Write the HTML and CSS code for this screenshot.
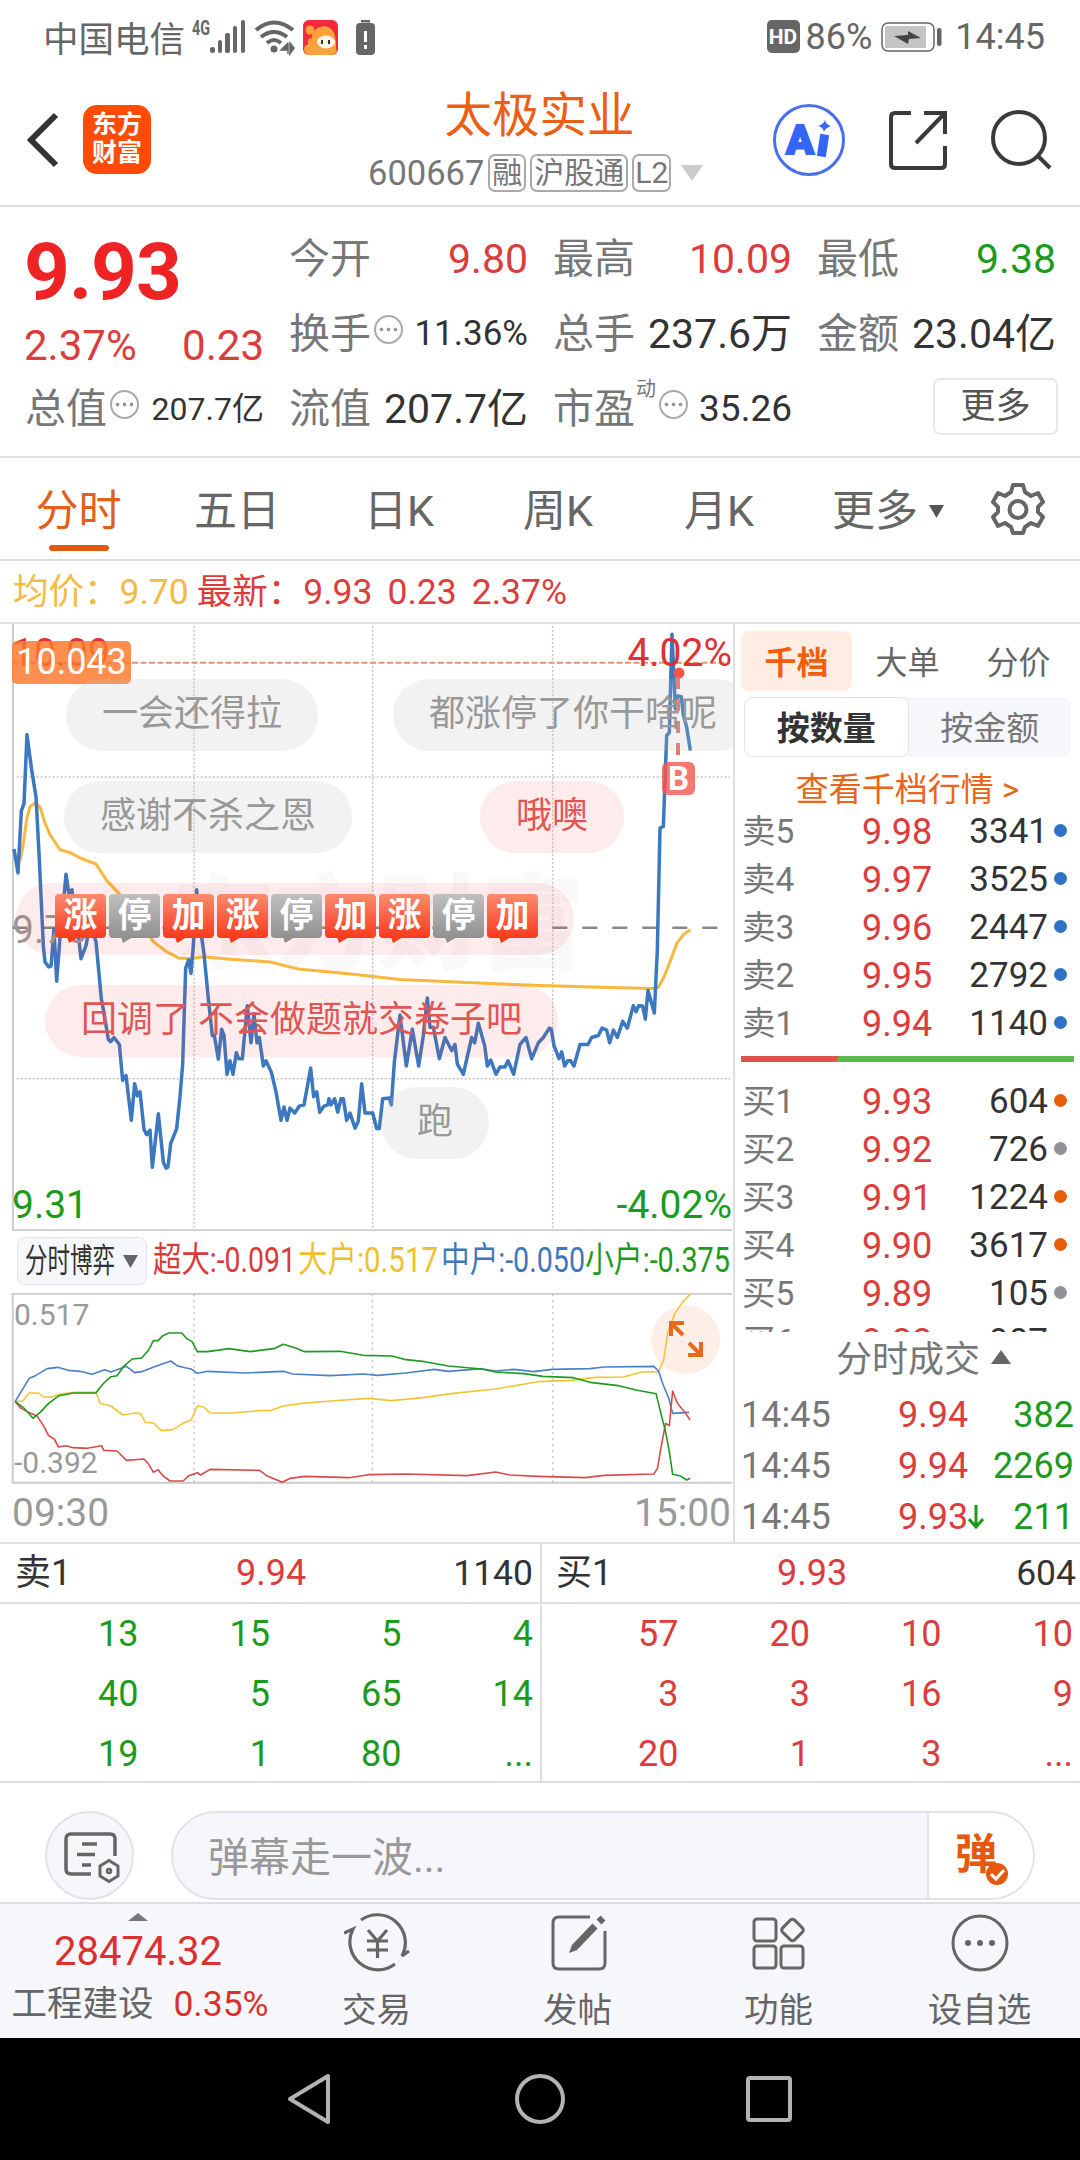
FILE: index.html
```
<!DOCTYPE html>
<html lang="zh-CN">
<head>
    <meta charset="UTF-8">
    <title>太极实业 600667</title>
    <link rel="stylesheet" href="styles.css">
</head>
<body>
    <!-- Status bar -->
    <div class="status-bar">
        <span class="carrier">中国电信</span>
        <svg class="status-icons" width="190" height="40" viewBox="190 16 190 40">
            <text x="192" y="34" class="net" textLength="18" lengthAdjust="spacingAndGlyphs">4G</text>
            <g fill="#666">
                <rect x="210" y="46" width="5" height="6" rx="2.500"/>
                <rect x="218" y="39" width="4" height="13" rx="2"/>
                <rect x="225" y="32" width="5" height="20" rx="2"/>
                <rect x="233" y="25" width="4" height="27" rx="2"/>
                <rect x="241" y="19" width="4" height="33" rx="2"/>
                <circle cx="274" cy="48" r="3.500"/>
                <path d="M288 42v11M288 42l-7 7h7M290 42v11l4-6z" stroke="#666" stroke-width="1.500"/>
            </g>
            <path d="M256 29q18-15 37 0M261 36q13-10 26 0M267 42q7-6 14 0" fill="none" stroke="#666" stroke-width="4"/>
            <rect x="303" y="19" width="35" height="35" rx="6" fill="#f5283c"/>
            <path d="M304 47q2-4 4-3q-1-7 3-7v5q0-16 14-17q11 2 11 19q0 6 1 6q-2 4-6 4h-21q-6 0-6-7z" fill="#f9a33a"/>
            <circle cx="310" cy="29" r="4.500" fill="#f9a33a"/>
            <ellipse cx="326" cy="41" rx="9" ry="6.500" fill="#fff3e6"/>
            <path d="M322 39v4M329 39v4" stroke="#333" stroke-width="2"/>
            <rect x="361" y="19" width="9" height="2.500" fill="#666"/>
            <rect x="356" y="22" width="19" height="32" rx="4" fill="#666"/>
            <path d="M365.500 30v11M365.500 44v4" stroke="#fff" stroke-width="3"/>
        </svg>
        <div class="status-right">
            <span class="hd">HD</span>
            <span>86%</span>
            <svg class="battery" width="62" height="30" viewBox="0 0 62 30">
                <rect x="1" y="1" width="52" height="28" rx="6" fill="#fff" stroke="#666" stroke-width="1.500"/>
                <rect x="4" y="4" width="41" height="22" rx="1" fill="#c4c4c4"/>
                <path d="M13 14l14-1V9l13 7-12 1-1 5z" fill="#444"/>
                <rect x="56" y="6" width="4.500" height="18" rx="2" fill="#666"/>
            </svg>
            <span>14:45</span>
        </div>
    </div>

    <!-- Header -->
    <header class="header">
        <div class="header-left">
            <svg width="34" height="58" viewBox="0 0 34 58"><path d="M31 4L6 29l25 25" fill="none" stroke="#333" stroke-width="6"/></svg>
            <div class="logo">东方<br>财富</div>
        </div>
        <div class="header-title">
            <h1>太极实业</h1>
            <div class="code">
                <span>600667</span>
                <span class="tag">融</span>
                <span class="tag">沪股通</span>
                <span class="tag">L2</span>
                <svg width="22" height="16" viewBox="0 0 22 16"><path d="M0 0h22L11 16z" fill="#ccc"/></svg>
            </div>
        </div>
        <div class="header-right">
            <svg width="74" height="74" viewBox="0 0 74 74">
                <circle cx="37" cy="37" r="34.500" fill="#fff" stroke="#4a6fee" stroke-width="3"/>
                <text x="14" y="51" class="ai" textLength="28" lengthAdjust="spacingAndGlyphs">A</text>
                <path d="M52 36l-2 13" stroke="#3465f6" stroke-width="9" stroke-linecap="square"/>
                <path d="M53 17q1 5 6 6q-6 2-7 6q-1-5-6-6q6-2 7-6z" fill="#3465f6"/>
            </svg>
            <svg width="58" height="60" viewBox="0 0 58 60" fill="none" stroke="#3a3a3a" stroke-width="4">
                <path d="M22 3H6q-4 0-4 4v47q0 4 4 4h46q4 0 4-4V36M35 3h21v21M56 3L27 33"/>
            </svg>
            <svg width="62" height="62" viewBox="0 0 62 62" fill="none" stroke="#3a3a3a" stroke-width="4">
                <circle cx="29" cy="29" r="26"/>
                <path d="M47 46l13 13"/>
            </svg>
        </div>
    </header>

    <!-- Quote -->
    <section class="quote">
        <div class="quote-col">
            <div class="price">9.93</div>
            <div class="change"><span>2.37%</span><span>0.23</span></div>
            <div class="item"><label>总值</label><i class="more-dot"></i><b class="s33">207.7亿</b></div>
        </div>
        <div class="quote-col">
            <div class="item"><label>今开</label><b class="red">9.80</b></div>
            <div class="item"><label>换手</label><i class="more-dot"></i><b class="s36">11.36%</b></div>
            <div class="item"><label>流值</label><b>207.7亿</b></div>
        </div>
        <div class="quote-col">
            <div class="item"><label>最高</label><b class="red">10.09</b></div>
            <div class="item"><label>总手</label><b>237.6万</b></div>
            <div class="item"><label>市盈</label><sup>动</sup><i class="more-dot"></i><b class="s38">35.26</b></div>
        </div>
        <div class="quote-col">
            <div class="item"><label>最低</label><b class="green">9.38</b></div>
            <div class="item"><label>金额</label><b>23.04亿</b></div>
            <div class="item end"><button class="more-btn">更多</button></div>
        </div>
    </section>

    <!-- Period tabs -->
    <nav class="tabs">
        <a class="active">分时</a>
        <a>五日</a>
        <a>日K</a>
        <a>周K</a>
        <a>月K</a>
        <a>更多<svg width="15" height="13" viewBox="0 0 15 13"><path d="M0 0h15L7.500 13z" fill="#555"/></svg></a>
        <svg class="gear" width="54" height="54" viewBox="0 0 54 54" fill="none" stroke="#666" stroke-width="4" stroke-linejoin="round">
            <path d="M22 3h10l2 7 6 4 7-3 5 9-5 5v5l5 5-5 9-7-3-6 4-2 6H22l-2-6-6-4-7 3-5-9 5-5v-5l-5-5 5-9 7 3 6-4z"/>
            <circle cx="27" cy="27.500" r="8.500"/>
        </svg>
    </nav>

    <div class="info-line">
        <span class="avg">均价：<em>9.70</em></span>
        <span class="last">最新：<em>9.93</em><em>0.23</em><em>2.37%</em></span>
    </div>

    <main class="board">
        <!-- Charts -->
        <div class="charts">
            <div class="chart-box">
                <div class="watermark">东方财富</div>
                <svg class="plot" width="734" height="607" viewBox="0 32 2202 1487" preserveAspectRatio="none" fill="none">
                    <g stroke="#c4c4c4" stroke-width="1.500" stroke-dasharray="2 2">
                        <path d="M582 36V1516M1118 36V1516M1658 36V1516M50 407H2190M50 1146H2190"/>
                    </g>
                    <path d="M39 32V1517H2196" stroke="#ccc" stroke-width="2"/>
                    <path d="M39 127H2190" stroke="#e2966a" stroke-width="2" stroke-dasharray="6 2.500"/>
                    <path d="M37 776H2155" stroke="#888" stroke-width="2.500" stroke-dasharray="15 15"/>
                    <polyline stroke="#f9b73e" stroke-width="3" points="60,612 70,570 80,510 90,480 105,470 120,480 135,520 150,548 180,585 210,592 240,605 288,620 320,660 360,695 400,740 460,810 500,835 535,850 570,852 610,847 690,853 810,860 900,878 1000,885 1080,892 1200,903 1400,910 1600,917 1800,922 1960,925 1975,922 1990,900 2010,860 2030,815 2050,793 2071,781"/>
                    <polyline stroke="#3b78bf" stroke-width="3.500" points="42,583 54,642 64,490 72,472 81,303 95,390 108,455 118,610 130,820 135,860 146,872 153,870 162,780 170,907 180,800 190,720 198,645 206,690 216,683 225,770 236,800 243,852 258,820 265,790 275,780 288,810 304,950 312,985 325,1050 332,1055 342,1045 358,1062 368,1150 378,1138 394,1248 404,1158 412,1188 420,1178 432,1270 440,1283 450,1272 457,1363 475,1232 490,1350 498,1365 504,1362 512,1305 530,1268 540,1190 548,1110 557,875 566,855 573,888 580,820 590,683 600,770 612,840 625,950 637,1040 643,1040 655,1098 665,1025 672,1040 681,1135 690,1102 699,1135 709,1082 716,1097 727,1097 742,967 753,1058 762,987 771,1058 778,1045 790,1115 798,1102 814,1130 828,1178 843,1248 852,1215 861,1248 870,1218 884,1230 898,1213 912,1210 932,1120 941,1190 950,1178 959,1228 972,1213 983,1210 987,1195 993,1210 1004,1195 1013,1228 1023,1195 1030,1195 1040,1248 1050,1230 1065,1267 1075,1250 1085,1158 1095,1230 1118,1230 1130,1268 1138,1268 1148,1195 1168,1193 1174,1210 1183,1105 1200,990 1219,1115 1237,1025 1256,1115 1270,1040 1282,948 1290,1020 1300,1020 1318,1097 1335,1045 1355,1077 1365,1062 1372,1110 1390,1135 1415,1045 1424,1058 1435,1010 1454,1065 1462,1115 1472,1100 1488,1135 1500,1117 1515,1117 1524,1102 1541,1135 1560,1062 1578,1045 1595,1097 1615,1058 1630,1045 1648,1022 1654,1025 1662,1065 1677,1097 1685,1080 1694,1115 1703,1102 1712,1102 1722,1115 1740,1062 1764,1062 1775,1045 1795,1040 1806,1022 1820,1027 1829,1058 1840,1027 1852,1045 1868,1005 1882,1022 1900,967 1908,982 1916,967 1928,968 1936,1000 1944,930 1963,985 1972,830 1980,532 1990,528 2000,305 2008,298 2016,57 2026,240 2034,208 2044,210 2050,255 2060,285 2071,342"/>
                </svg>
                <span class="axis top-left">10.09</span>
                <span class="axis mid-left">9.70</span>
                <span class="axis bottom-left">9.31</span>
                <span class="axis top-right">4.02%</span>
                <span class="axis bottom-right">-4.02%</span>
                <span class="level">10.043</span>
                <svg class="marker" width="34" height="130" viewBox="0 0 34 130">
                    <circle cx="18" cy="6" r="5.500" fill="#f5564c"/>
                    <path d="M17 10V94" stroke="#e8766c" stroke-width="4" stroke-dasharray="12 10"/>
                    <rect x="1" y="95" width="33" height="33" rx="6" fill="#f5564c" fill-opacity=".8"/>
                    <text x="17.500" y="123" text-anchor="middle">B</text>
                </svg>
                <!-- Danmaku -->
                <div class="bubble b1">一会还得拉</div>
                <div class="bubble b2">都涨停了你干啥呢</div>
                <div class="bubble b3">感谢不杀之恩</div>
                <div class="bubble b4 hot">哦噢</div>
                <div class="bubble b5 hot">
                    <i>涨</i><i class="gray">停</i><i>加</i><i>涨</i><i class="gray">停</i><i>加</i><i>涨</i><i class="gray">停</i><i>加</i>
                </div>
                <div class="bubble b6 hot">回调了 不会做题就交卷子吧</div>
                <div class="bubble b7">跑</div>
            </div>

            <svg class="legend" width="733" height="62" viewBox="0 1230 733 62">
                <rect x="17.500" y="1236.500" width="129" height="47" rx="7" fill="#f6f7fa" stroke="#e3e5ea"/>
                <g font-size="35">
                    <text x="25" y="1271" textLength="90" lengthAdjust="spacingAndGlyphs" fill="#333" font-size="33">分时博弈</text>
                    <path d="M123 1254h15l-7.500 13z" fill="#666"/>
                    <text x="153" y="1271" textLength="143" lengthAdjust="spacingAndGlyphs" fill="#d93a3a">超大:-0.091</text>
                    <text x="298" y="1271" textLength="140" lengthAdjust="spacingAndGlyphs" fill="#efc02c">大户:0.517</text>
                    <text x="441" y="1271" textLength="144" lengthAdjust="spacingAndGlyphs" fill="#3f77bd">中户:-0.050</text>
                    <text x="585" y="1271" textLength="145" lengthAdjust="spacingAndGlyphs" fill="#1c9a1c">小户:-0.375</text>
                </g>
            </svg>

            <div class="flow-box">
                <svg class="plot" width="734" height="191" viewBox="0 214 1555 573" preserveAspectRatio="none" fill="none">
                    <path d="M1453 251a73 103 0 0 1 0 206a73 103 0 0 1 0-206z" fill="#fdefe7" stroke="none"/>
                    <g stroke="#c4c4c4" stroke-width="1.500" stroke-dasharray="2 4">
                        <path d="M411 218V783M789 218V783M1171 218V783"/>
                    </g>
                    <path d="M1551 216H27V783H1551" stroke="#ccc" stroke-width="2"/>
                    <g stroke-width="1.600">
                        <polyline stroke="#f2c534" points="32,540 48,538 62,514 82,514 92,526 110,526 125,518 160,512 203,512 212,545 235,553 260,580 285,574 298,576 308,602 325,604 342,627 366,624 388,605 405,595 418,553 432,556 445,574 490,574 550,567 575,566 600,553 640,545 700,538 780,530 830,537 900,527 960,515 1050,502 1140,480 1210,476 1260,467 1320,466 1360,451 1395,450 1406,415 1415,330 1430,275 1445,243 1462,218"/>
                        <polyline stroke="#4a80c4" points="32,540 50,498 62,470 75,462 100,441 122,437 145,446 170,449 195,458 222,444 235,451 268,434 285,453 300,450 330,434 362,418 375,432 392,438 405,442 418,455 440,449 520,454 600,449 620,457 700,462 770,457 800,461 860,454 920,443 950,449 1020,441 1050,448 1090,443 1130,450 1170,443 1250,441 1280,436 1385,434 1395,448 1405,490 1417,530 1425,575 1460,572"/>
                        <polyline stroke="#d94a4a" points="32,540 45,560 65,575 78,582 92,612 103,642 115,652 124,676 140,672 155,678 185,680 215,672 220,686 248,688 268,716 305,712 315,728 325,752 335,744 345,762 360,778 388,778 400,762 418,753 425,760 445,743 550,746 565,762 598,782 615,770 645,764 740,768 780,759 860,757 990,762 1050,751 1080,760 1140,764 1240,768 1280,761 1385,757 1393,740 1400,680 1410,605 1418,612 1425,508 1435,545 1450,570 1462,595"/>
                        <polyline stroke="#1f9a1f" points="32,540 50,558 70,590 85,572 103,545 125,522 155,514 203,514 220,484 235,465 248,462 262,434 280,412 300,409 315,385 325,357 335,357 345,342 358,334 385,334 395,350 407,360 418,390 440,390 485,381 530,390 580,381 600,368 625,378 645,390 720,389 770,401 830,403 860,414 900,420 950,433 1020,442 1050,451 1110,456 1150,464 1215,468 1250,482 1310,492 1350,506 1390,516 1400,575 1410,630 1418,690 1425,758 1440,762 1455,775 1462,770"/>
                    </g>
                </svg>
                <svg class="expand" width="38" height="38" viewBox="0 0 38 38" fill="none" stroke="#e5691f" stroke-width="4">
                    <path d="M4 16V3h13M4 3l12 12M34 22v13H21M34 35L22 23"/>
                </svg>
                <span class="flow-label">0.517</span>
                <span class="flow-label low">-0.392</span>
            </div>
            <div class="time-axis"><span>09:30</span><span>15:00</span></div>
        </div>

        <!-- Order book -->
        <aside class="depth">
            <div class="depth-tabs"><a class="active">千档</a><a>大单</a><a>分价</a></div>
            <div class="segment"><a class="active">按数量</a><a>按金额</a></div>
            <div class="depth-link">查看千档行情 &gt;</div>
            <ul class="levels">
                <li><span>卖5</span><b>9.98</b><em>3341</em><i></i></li>
                <li><span>卖4</span><b>9.97</b><em>3525</em><i></i></li>
                <li><span>卖3</span><b>9.96</b><em>2447</em><i></i></li>
                <li><span>卖2</span><b>9.95</b><em>2792</em><i></i></li>
                <li><span>卖1</span><b>9.94</b><em>1140</em><i></i></li>
            </ul>
            <div class="ratio"></div>
            <ul class="levels buy">
                <li><span>买1</span><b>9.93</b><em>604</em><i class="orange"></i></li>
                <li><span>买2</span><b>9.92</b><em>726</em><i class="gray"></i></li>
                <li><span>买3</span><b>9.91</b><em>1224</em><i class="orange"></i></li>
                <li><span>买4</span><b>9.90</b><em>3617</em><i class="orange"></i></li>
                <li><span>买5</span><b>9.89</b><em>105</em><i class="gray"></i></li>
                <li><span>买6</span><b>9.88</b><em>907</em><i class="orange"></i></li>
            </ul>
            <div class="deals-title">分时成交<svg width="20" height="14" viewBox="0 0 20 14"><path d="M0 14h20L10 0z" fill="#666"/></svg></div>
            <ul class="deals">
                <li><span>14:45</span><b>9.94</b><em>382</em></li>
                <li><span>14:45</span><b>9.94</b><em>2269</em></li>
                <li><span>14:45</span><b>9.93<svg width="16" height="24" viewBox="0 0 16 24"><path d="M8 0v22M1 14l7 8 7-8" fill="none" stroke="#1c9a1c" stroke-width="3"/></svg></b><em>211</em></li>
            </ul>
        </aside>
    </main>

    <!-- Level-2 queue -->
    <section class="queue">
        <div class="side sell">
            <div class="side-head"><span>卖1</span><b>9.94</b><em>1140</em></div>
            <div class="cells">
                <span>13</span><span>15</span><span>5</span><span>4</span>
                <span>40</span><span>5</span><span>65</span><span>14</span>
                <span>19</span><span>1</span><span>80</span><span>...</span>
            </div>
        </div>
        <div class="side buy">
            <div class="side-head"><span>买1</span><b>9.93</b><em>604</em></div>
            <div class="cells">
                <span>57</span><span>20</span><span>10</span><span>10</span>
                <span>3</span><span>3</span><span>16</span><span>9</span>
                <span>20</span><span>1</span><span>3</span><span>...</span>
            </div>
        </div>
    </section>

    <!-- Danmaku input -->
    <div class="comment-bar">
        <div class="round-btn">
            <svg width="56" height="52" viewBox="0 0 56 52" fill="none" stroke="#666" stroke-width="3.500">
                <path d="M27 42H7q-5 0-5-5V7q0-5 5-5h39q5 0 5 5v17M18 12h15M13 22.500h18M18 33h9"/>
                <path d="M45 28.500l9 5.500v10l-9 5.500-9-5.500V34z" stroke-width="3"/>
                <circle cx="45" cy="39" r="2" stroke-width="2.500"/>
            </svg>
        </div>
        <div class="comment-input">
            <span class="placeholder">弹幕走一波...</span>
            <div class="danmaku-toggle">弹
                <svg width="24" height="24" viewBox="0 0 24 24"><circle cx="12" cy="12" r="11" fill="#e5590c"/><path d="M6 12l5 5 8-9" fill="none" stroke="#fff" stroke-width="3"/></svg>
            </div>
        </div>
    </div>

    <!-- Bottom toolbar -->
    <footer class="toolbar">
        <div class="index">
            <svg width="20" height="8" viewBox="0 0 20 8"><path d="M0 8h20L10 0z" fill="#777"/></svg>
            <div class="index-value">28474.32</div>
            <div class="index-name">工程建设<b>0.35%</b></div>
        </div>
        <div class="tool">
            <svg width="66" height="60" viewBox="0 0 66 60" fill="none" stroke="#666" stroke-width="3.200">
                <path d="M17 7A28 28 0 0 1 58 43L65 38M51 51A28 28 0 0 1 9 16L0 20"/>
                <path d="M24 17l9.500 11 9.500-11M33.500 28v17M23 28h21M23 37h21"/>
            </svg>
            交易
        </div>
        <div class="tool">
            <svg width="66" height="60" viewBox="0 0 66 60" fill="none" stroke="#666" stroke-width="3">
                <path d="M45 4H14q-6 0-6 6v40q0 6 6 6h40q6 0 6-6V18"/>
                <path d="M29 35L50 13M54 9l4-4" stroke-width="7"/>
                <path d="M24 40l3-8 5 5z" fill="#666" stroke="none"/>
            </svg>
            发帖
        </div>
        <div class="tool">
            <svg width="66" height="60" viewBox="0 0 66 60" fill="none" stroke="#666" stroke-width="3">
                <rect x="8" y="6" width="22" height="22" rx="3"/>
                <rect x="8" y="33" width="22" height="22" rx="3"/>
                <rect x="35" y="33" width="22" height="22" rx="3"/>
                <rect x="38" y="8.500" width="17" height="17" rx="3" transform="rotate(45 46.500 17)"/>
            </svg>
            功能
        </div>
        <div class="tool">
            <svg width="66" height="60" viewBox="0 0 66 60" fill="none" stroke="#666" stroke-width="3">
                <circle cx="33" cy="30" r="27"/>
                <g fill="#666" stroke="none"><circle cx="21" cy="30" r="3"/><circle cx="33" cy="30" r="3"/><circle cx="45" cy="30" r="3"/></g>
            </svg>
            设自选
        </div>
    </footer>

    <!-- Android navigation -->
    <div class="android-nav">
        <svg width="1080" height="122" viewBox="0 2038 1080 122" fill="none" stroke="#b3b3b3" stroke-width="4" stroke-linejoin="round">
            <path d="M328 2076v46l-38-23z"/>
            <circle cx="540" cy="2099" r="23"/>
            <rect x="748" y="2078" width="42" height="42" rx="2"/>
        </svg>
    </div>
</body>
</html>
```
FILE: styles.css
```
* {
    margin: 0;
    padding: 0;
    box-sizing: border-box;
}

body {
    width: 1080px;
    height: 2160px;
    overflow: hidden;
    font-family: Roboto, 'Noto Sans CJK SC', sans-serif;
    background: #fff;
    color: #333;
    display: flex;
    flex-direction: column;
}

body > * {
    flex-shrink: 0;
}

b, em, i {
    font-weight: 400;
    font-style: normal;
}

ul {
    list-style: none;
}

svg {
    display: block;
    flex-shrink: 0;
}

/* Status bar */
.status-bar {
    height: 74px;
    padding: 0 35px 0 43px;
    display: flex;
    align-items: center;
    color: #666;
    font-size: 36px;
}

.carrier {
    font-size: 35.5px;
    width: 147px;
    margin-top: -2px;
}

.net {
    font-size: 20px;
    font-weight: 700;
    fill: #666;
}

.status-right {
    margin-left: auto;
    display: flex;
    align-items: center;
}

.hd {
    width: 33px;
    height: 33px;
    line-height: 34px;
    margin: -2px 6px 0 0;
    border-radius: 5px;
    background: #666;
    color: #fff;
    font-size: 21px;
    font-weight: 700;
    text-align: center;
}

.battery {
    margin: 0 12px 0 9px;
}

/* Header */
.header {
    height: 133px;
    border-bottom: 2px solid #dedfe1;
    display: flex;
    align-items: center;
    justify-content: space-between;
    padding: 0 28px 0 25px;
    position: relative;
}

.header-left,
.header-right {
    display: flex;
    align-items: center;
}

.header-left {
    gap: 24px;
}

.header-right {
    gap: 43px;
}

.logo {
    width: 68px;
    height: 69px;
    padding-top: 6px;
    border-radius: 14px;
    background: #ff4b05;
    color: #fff;
    font-size: 25px;
    font-weight: 700;
    line-height: 28px;
    text-align: center;
}

.header-title {
    position: absolute;
    left: 368px;
    top: 14px;
}

.header-title h1 {
    width: 343px;
    font-size: 47.5px;
    font-weight: 400;
    line-height: 56px;
    color: #ec5f14;
    text-align: center;
}

.code {
    display: flex;
    align-items: center;
    gap: 4px;
    margin-top: 10px;
    font-size: 34.5px;
    line-height: 38px;
    color: #777;
}

.code svg {
    margin-left: 6px;
}

.tag {
    height: 38px;
    padding: 0 2px;
    border: 2px solid #aaa;
    border-radius: 7px;
    font-size: 30px;
    line-height: 34px;
}

.tag:nth-child(4) {
    padding: 0 1px;
}

.ai {
    font-size: 41px;
    font-weight: 900;
    fill: #3465f6;
    stroke: #3465f6;
    stroke-width: 2px;
}

/* Quote */
.quote {
    height: 251px;
    padding: 14px 25px 0 26px;
    border-bottom: 2px solid #dedfe1;
    display: grid;
    grid-template-columns: repeat(4, 238px);
    gap: 26px;
}

.item {
    height: 75px;
    display: flex;
    align-items: center;
    line-height: 60px;
}

.item label {
    font-size: 41px;
    color: #777;
    white-space: nowrap;
    margin-left: -1px;
}

.item b {
    margin-left: auto;
    font-size: 41px;
    white-space: nowrap;
}

.item b.s33 {
    font-size: 32px;
}

.item b.s36 {
    font-size: 35px;
}

.item b.s38 {
    font-size: 37px;
}

.item sup {
    font-size: 20px;
    line-height: 20px;
    color: #777;
    align-self: flex-start;
    margin: 8px 0 0 1px;
}

.item.end {
    justify-content: flex-end;
}

.more-dot {
    width: 29px;
    height: 29px;
    margin: -8px 0 0 3px;
    flex-shrink: 0;
    border: 2px solid #aaa;
    border-radius: 50%;
    background: radial-gradient(circle, #999 1.7px, transparent 2.2px) center / 7px 7px repeat-x;
    background-clip: content-box;
    padding: 0 2px;
}

.red {
    color: #dc3c3c;
}

.green {
    color: #1c9a1c;
}

.price {
    height: 93px;
    line-height: 102px;
    font-size: 80px;
    font-weight: 700;
    letter-spacing: -1px;
    margin-left: -2px;
    color: #ee2424;
}

.change {
    height: 57px;
    line-height: 64px;
    display: flex;
    justify-content: space-between;
    margin-left: -2px;
    font-size: 42px;
    color: #dc3c3c;
}

.more-btn {
    width: 125px;
    height: 57px;
    margin: -4px -2px 0 0;
    border: 2px solid #e6e8eb;
    border-radius: 7px;
    background: #fff;
    font-family: inherit;
    font-size: 35px;
    line-height: 50px;
    color: #555;
}

/* Tabs */
.tabs {
    height: 103px;
    border-bottom: 2px solid #dedfe1;
    display: grid;
    grid-template-columns: 157px 160px 164px 154px 168px 170px 90px;
    align-items: center;
    justify-items: center;
    font-size: 43px;
    line-height: 101px;
    color: #666;
}

.tabs a {
    display: flex;
    align-items: center;
    gap: 11px;
    position: relative;
    height: 101px;
    padding-top: 5px;
}

.tabs a.active {
    color: #e2601a;
}

.tabs a.active::after {
    content: "";
    position: absolute;
    left: 13px;
    bottom: 8px;
    width: 60px;
    height: 6px;
    border-radius: 3px;
    background: #e05a10;
}

.info-line {
    height: 63px;
    padding-left: 13px;
    border-bottom: 2px solid #dedfe1;
    display: flex;
    gap: 8px;
    font-size: 35.5px;
    line-height: 63px;
}

.avg {
    color: #f3bb45;
}

.last {
    color: #dc3c3c;
}

.last em {
    margin-right: 15px;
}

/* Board */
.board {
    height: 920px;
    border-bottom: 2px solid #dedfe1;
    display: flex;
}

.charts {
    width: 735px;
    border-right: 2px solid #dedfe1;
}

.chart-box {
    position: relative;
    height: 607px;
    overflow: hidden;
}

.plot {
    position: relative;
}

.plot path,
.plot polyline {
    vector-effect: non-scaling-stroke;
    stroke-linejoin: round;
}

.watermark {
    position: absolute;
    left: 172px;
    top: 232px;
    font-size: 103px;
    font-weight: 900;
    line-height: 140px;
    color: #f9f9f9;
    white-space: nowrap;
}

.axis {
    position: absolute;
    font-size: 39px;
    line-height: 40px;
}

.top-left,
.top-right {
    top: 9px;
    color: #e03030;
}

.mid-left {
    top: 286px;
    color: #999;
}

.bottom-left,
.bottom-right {
    top: 561px;
    color: #1c9a1c;
}

.top-left,
.mid-left,
.bottom-left {
    left: 12px;
}

.top-right,
.bottom-right {
    right: 1px;
}

.level {
    position: absolute;
    left: 12px;
    top: 17px;
    width: 119px;
    height: 43px;
    border-radius: 5px;
    background: rgba(255, 122, 48, .84);
    color: #fff;
    font-size: 36px;
    line-height: 43px;
    text-align: center;
}

.marker {
    position: absolute;
    left: 661px;
    top: 43px;
}

.marker text {
    font-size: 33px;
    font-weight: 700;
    fill: #fff;
}

.bubble {
    position: absolute;
    height: 72px;
    padding: 0 36px;
    border-radius: 36px;
    background: rgba(190, 190, 190, .2);
    color: #999;
    font-size: 36px;
    line-height: 71px;
    white-space: nowrap;
}

.bubble.hot {
    background: rgba(240, 70, 60, .1);
    color: #e25555;
}

.b1 { left: 66px; top: 55px; }
.b2 { left: 393px; top: 55px; }
.b3 { left: 64px; top: 157px; }
.b4 { left: 480px; top: 157px; }
.b6 { left: 45px; top: 361px; }
.b7 { left: 381px; top: 463px; }

.b5 {
    left: 16px;
    top: 259px;
    display: flex;
    gap: 3px;
    padding: 11px 36px 0 39px;
}

.b5 i {
    position: relative;
    width: 51px;
    height: 44px;
    border-radius: 4px;
    background: linear-gradient(#fb8b6f, #fb3a1c);
    color: #fff;
    font-size: 34px;
    font-weight: 700;
    line-height: 43px;
    text-align: center;
}

.b5 i::after {
    content: "";
    position: absolute;
    left: 12px;
    top: 43px;
    border: solid transparent;
    border-width: 6px 10px 0 2px;
    border-top-color: #fb3a1c;
}

.b5 i.gray {
    background: linear-gradient(#c0c0c0, #909090);
}

.b5 i.gray::after {
    border-top-color: #909090;
}

.flow-box {
    position: relative;
    height: 191px;
}

.expand {
    position: absolute;
    left: 667px;
    top: 27px;
}

.flow-label {
    position: absolute;
    left: 14px;
    top: 5px;
    font-size: 30px;
    line-height: 34px;
    color: #999;
}

.flow-label.low {
    top: 153px;
}

.time-axis {
    display: flex;
    justify-content: space-between;
    padding: 0 2px 0 12px;
    font-size: 39px;
    line-height: 58px;
    color: #999;
}

/* Order book */
.depth {
    width: 345px;
    padding: 7px 6px 0;
    font-size: 36px;
}

.depth-tabs {
    display: flex;
    height: 60px;
    font-size: 32px;
    line-height: 65px;
    text-align: center;
    color: #666;
}

.depth-tabs a {
    width: 111px;
}

.depth-tabs a.active {
    border-radius: 8px;
    background: #ffede4;
    color: #f55c0e;
    font-weight: 700;
}

.segment {
    display: flex;
    height: 60px;
    margin: 6px 3px 0;
    border-radius: 9px;
    background: #f6f7fa;
    font-size: 33px;
    line-height: 63px;
    text-align: center;
    color: #777;
}

.segment a {
    flex: 1;
}

.segment a.active {
    border: 1px solid #e2e3e6;
    border-radius: 9px;
    background: #fff;
    color: #333;
    font-weight: 700;
    line-height: 61px;
}

.depth-link {
    height: 50px;
    padding-top: 3px;
    font-size: 33px;
    line-height: 60px;
    text-align: center;
    color: #ec6418;
}

.levels li {
    display: grid;
    grid-template-columns: 120px 80px 106px 1fr;
    height: 48px;
    line-height: 50px;
    align-items: center;
    padding-left: 1px;
}

.levels span {
    font-size: 33.5px;
    color: #777;
}

.levels b,
.deals b {
    color: #dc3c3c;
}

.levels em {
    text-align: right;
    font-size: 35px;
}

.levels i {
    width: 13px;
    height: 13px;
    margin: -4px 0 0 6px;
    border-radius: 50%;
    background: #2f74c4;
}

.levels i.orange {
    background: #e85d0a;
}

.levels i.gray {
    background: #909096;
}

.ratio {
    height: 6px;
    margin: 9px 0 15px;
    background: linear-gradient(115deg, #e25050 88px, #62b850 89px);
}

.levels.buy {
    height: 255px;
    overflow: hidden;
}

.deals-title {
    display: flex;
    align-items: center;
    gap: 11px;
    height: 57px;
    padding-left: 95px;
    font-size: 36px;
    line-height: 57px;
    color: #777;
}

.deals-title svg {
    margin-top: -8px;
}

.deals li {
    display: grid;
    grid-template-columns: 157px 90px 1fr;
    height: 51px;
    line-height: 52px;
}

.deals span {
    color: #777;
}

.deals b {
    display: flex;
    align-items: center;
}

.deals em {
    text-align: right;
    color: #1c9a1c;
}

/* Level-2 queue */
.queue {
    height: 239px;
    border-bottom: 2px solid #dedfe1;
    display: flex;
    font-size: 36px;
}

.side {
    width: 542px;
}

.sell {
    border-right: 2px solid #dedfe1;
}

.side-head {
    height: 60px;
    line-height: 59px;
    border-bottom: 2px solid #dedfe1;
    display: grid;
    grid-template-columns: 221px 120px 1fr;
    padding: 0 7px 0 15px;
}

.buy .side-head {
    padding: 0 4px 0 14px;
}

.side-head b {
    color: #dc3c3c;
}

.side-head em {
    text-align: right;
    font-size: 35.5px;
}

.cells {
    display: grid;
    grid-template-columns: repeat(4, 1fr);
    line-height: 60px;
    text-align: right;
    padding: 0 7px 0 7px;
    color: #1c9a1c;
}

.side.buy {
    width: 538px;
}

.buy .cells {
    padding: 0 7px 0 5px;
    color: #dc3c3c;
}

/* Danmaku input */
.comment-bar {
    height: 119px;
    padding: 28px 45px 0;
    display: flex;
    gap: 37px;
}

.round-btn {
    width: 89px;
    height: 89px;
    padding: 19px 0 0 17px;
    border: 2px solid #e1e3e8;
    border-radius: 50%;
    background: #f6f7fa;
}

.comment-input {
    flex: 1;
    height: 89px;
    border: 2px solid #e1e3e8;
    border-radius: 45px;
    background: #f6f7fa;
    overflow: hidden;
    display: flex;
    line-height: 91px;
}

.placeholder {
    flex: 1;
    padding-left: 35px;
    font-size: 41px;
    color: #999;
}

.danmaku-toggle {
    position: relative;
    width: 106px;
    padding-left: 26px;
    border-left: 2px solid #e1e3e8;
    background: #fff;
    color: #e5590c;
    font-size: 42px;
    font-weight: 700;
    line-height: 83px;
}

.danmaku-toggle svg {
    position: absolute;
    left: 56px;
    top: 49px;
}

/* Toolbar */
.toolbar {
    height: 136px;
    border-top: 2px solid #dcdee1;
    background: #f6f7fa;
    display: flex;
    color: #666;
}

.index {
    width: 276px;
    padding-top: 9px;
    text-align: center;
}

.index svg {
    margin: 0 auto;
}

.index-value {
    font-size: 40px;
    line-height: 50px;
    margin-top: 6px;
    color: #dc3030;
}

.index-name {
    font-size: 35.5px;
    line-height: 54px;
    padding-left: 4px;
    white-space: nowrap;
}

.index-name b {
    margin-left: 20px;
    color: #dc3030;
}

.tool {
    width: 201px;
    padding-top: 9px;
    font-size: 34.5px;
    line-height: 75px;
    text-align: center;
}

.tool svg {
    margin: 0 auto;
}

.android-nav {
    height: 122px;
    background: #000;
}
```
